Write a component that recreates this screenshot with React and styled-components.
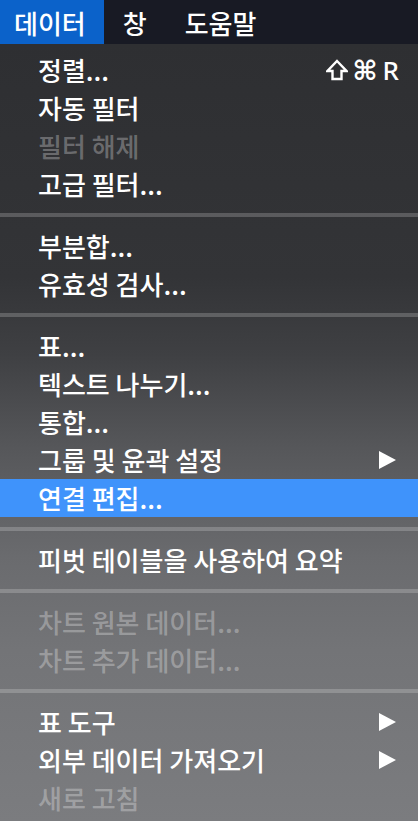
import React from "react";
import styled, {createGlobalStyle} from "styled-components";

const GlobalStyle = createGlobalStyle`
    html, body{
        margin: 0;
        padding: 0;
        background: #7b7c7f;
        overflow: hidden;
    }
    body{
        font-family: "Noto Sans CJK KR", "Noto Sans", sans-serif;
        -webkit-font-smoothing: antialiased;
    }
`;

const groups = [
    [
        {label: "정렬...", shortcut: true},
        {label: "자동 필터"},
        {label: "필터 해제", disabled: true},
        {label: "고급 필터..."},
    ],
    [
        {label: "부분합..."},
        {label: "유효성 검사..."},
    ],
    [
        {label: "표..."},
        {label: "텍스트 나누기..."},
        {label: "통합..."},
        {label: "그룹 및 윤곽 설정", submenu: true},
        {label: "연결 편집...", highlight: true},
    ],
    [
        {label: "피벗 테이블을 사용하여 요약"},
    ],
    [
        {label: "차트 원본 데이터...", disabled: true},
        {label: "차트 추가 데이터...", disabled: true},
    ],
    [
        {label: "표 도구", submenu: true},
        {label: "외부 데이터 가져오기", submenu: true},
        {label: "새로 고침", disabled: true},
    ],
];

function Arrow(){
    return(
        <svg width="18" height="18" viewBox="0 0 18 18">
            <path d="M1 0 L18 9 L1 18 Z" fill="currentColor"/>
        </svg>
    );
}

// outlined shift arrow
function ShiftIcon(){
    return(
        <svg width="22" height="22" viewBox="0 0 22 22">
            <path d="M11 2 L20.5 12 L15.5 12 L15.5 20 L6.5 20 L6.5 12 L1.5 12 Z"
                fill="none" stroke="currentColor" strokeWidth="2.4" strokeLinejoin="miter"/>
        </svg>
    );
}

function App(){
    return(
        <Page>
            <GlobalStyle/>
            <MenuBar>
                <BarItem $active $first>데이터</BarItem>
                <BarItem>창</BarItem>
                <BarItem>도움말</BarItem>
            </MenuBar>
            <Menu>
                {groups.map((group, gi)=>(
                    <React.Fragment key={gi}>
                        {gi > 0 && <Separator/>}
                        {group.map((item)=>(
                            <Item key={item.label} $disabled={item.disabled} $highlight={item.highlight}>
                                <span>{item.label}</span>
                                {item.shortcut && (
                                    <Shortcut>
                                        <ShiftIcon/>
                                        <Key $symbol>⌘</Key>
                                        <Key>R</Key>
                                    </Shortcut>
                                )}
                                {item.submenu && <SubArrow><Arrow/></SubArrow>}
                            </Item>
                        ))}
                    </React.Fragment>
                ))}
            </Menu>
        </Page>
    );
}

const Page = styled.div`
    width: 418px;
    height: 821px;
    display: flex;
    flex-direction: column;
    overflow: hidden;
`;

const MenuBar = styled.div`
    height: 44px;
    flex-shrink: 0;
    display: flex;
    align-items: stretch;
    background-color: #181a24;
`;

const BarItem = styled.div`
    display: flex;
    align-items: center;
    padding: 0 ${p=>p.$first ? "18px 0 14px" : "19px 0 19px"};
    font-size: 26px;
    font-weight: 500;
    color: #ffffff;
    background-color: ${p=>p.$active ? "#0b62ca" : "transparent"};
`;

const Menu = styled.div`
    flex: 1;
    padding: 7px 0 3px;
    background: linear-gradient(
        to bottom,
        #2e2f32 0%,
        #333437 30%,
        #3f4043 40%,
        #56575a 52%,
        #6a6b6e 66%,
        #737477 78%,
        #7b7c7f 100%
    );
`;

const Item = styled.div`
    height: 38px;
    display: flex;
    align-items: center;
    padding: 0 22px 0 38px;
    font-size: 26px;
    font-weight: 500;
    line-height: 1;
    color: ${p=>p.$disabled ? "rgba(255,255,255,0.3)" : "#ffffff"};
    background-color: ${p=>p.$highlight ? "#3f93fb" : "transparent"};
    white-space: nowrap;
`;

const Shortcut = styled.span`
    margin-left: auto;
    margin-right: -3px;
    display: flex;
    align-items: center;
    gap: 5px;
`;

const Key = styled.span`
    font-family: ${p=>p.$symbol ? '"DejaVu Sans", sans-serif' : '"Noto Sans", sans-serif'};
    font-size: ${p=>p.$symbol ? "27px" : "26px"};
    font-weight: ${p=>p.$symbol ? 700 : 500};
`;

const SubArrow = styled.span`
    margin-left: auto;
    display: flex;
    color: #ffffff;
`;

const Separator = styled.div`
    height: 4px;
    margin: 10px 0;
    background-color: rgba(255,255,255,0.2);
`;

export default App;
